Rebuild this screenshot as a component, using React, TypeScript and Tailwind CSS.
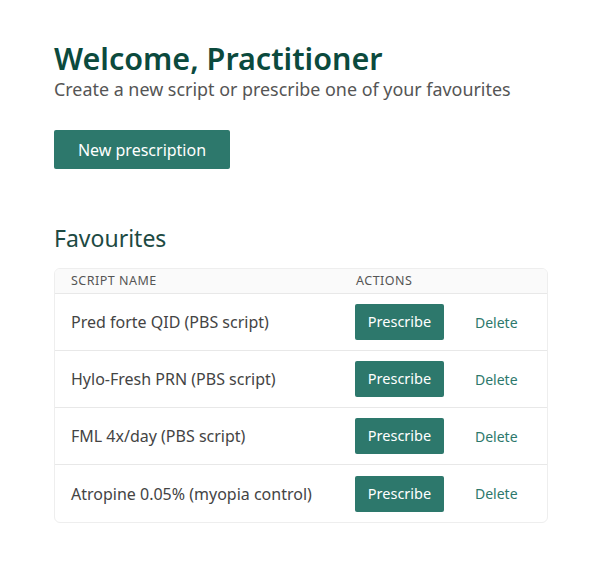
import React from "react";

const rows = [
  "Pred forte QID (PBS script)",
  "Hylo-Fresh PRN (PBS script)",
  "FML 4x/day (PBS script)",
  "Atropine 0.05% (myopia control)",
];

export default function App() {
  return (
    <div
      className="min-h-[582px] w-[600px] bg-white pl-[54px] pr-[52px] pt-[38px]"
      style={{ fontFamily: '"Noto Sans", "Open Sans", sans-serif' }}
    >
      <h1 className="text-[30.5px] font-semibold leading-[40px] text-[#0b4a3d]">
        Welcome, Practitioner
      </h1>
      <p className="text-[17.9px] leading-[22px] text-[#555555]">
        Create a new script or prescribe one of your favourites
      </p>
      <button className="mt-[30px] h-[39px] w-[176px] rounded-[2px] bg-[#2d786c] text-[16px] text-white">
        New prescription
      </button>
      <h2 className="mt-[54px] text-[23px] leading-[30px] text-[#1d4a43]">Favourites</h2>
      <div className="mt-[15px] overflow-hidden rounded-[6px] border border-[#eeeeee]">
        <div className="flex h-[25px] items-center border-b border-[#e8e8e8] bg-[#fafafa] text-[12.5px] tracking-[0.04em] text-[#555555]">
          <div className="w-[301px] pl-[16px]">SCRIPT NAME</div>
          <div>ACTIONS</div>
        </div>
        {rows.map((r, i) => (
          <div
            key={r}
            className={`flex h-[57px] items-center text-[16px] text-[#444444] ${
              i < rows.length - 1 ? "border-b border-[#e8e8e8]" : ""
            }`}
          >
            <div className="w-[300px] pl-[16px]">{r}</div>
            <button className="h-[36px] w-[89px] rounded-[2px] bg-[#2d786c] text-[14.5px] text-white">
              Prescribe
            </button>
            <button className="ml-[31px] text-[14px] text-[#2d786c]">Delete</button>
          </div>
        ))}
      </div>
    </div>
  );
}
